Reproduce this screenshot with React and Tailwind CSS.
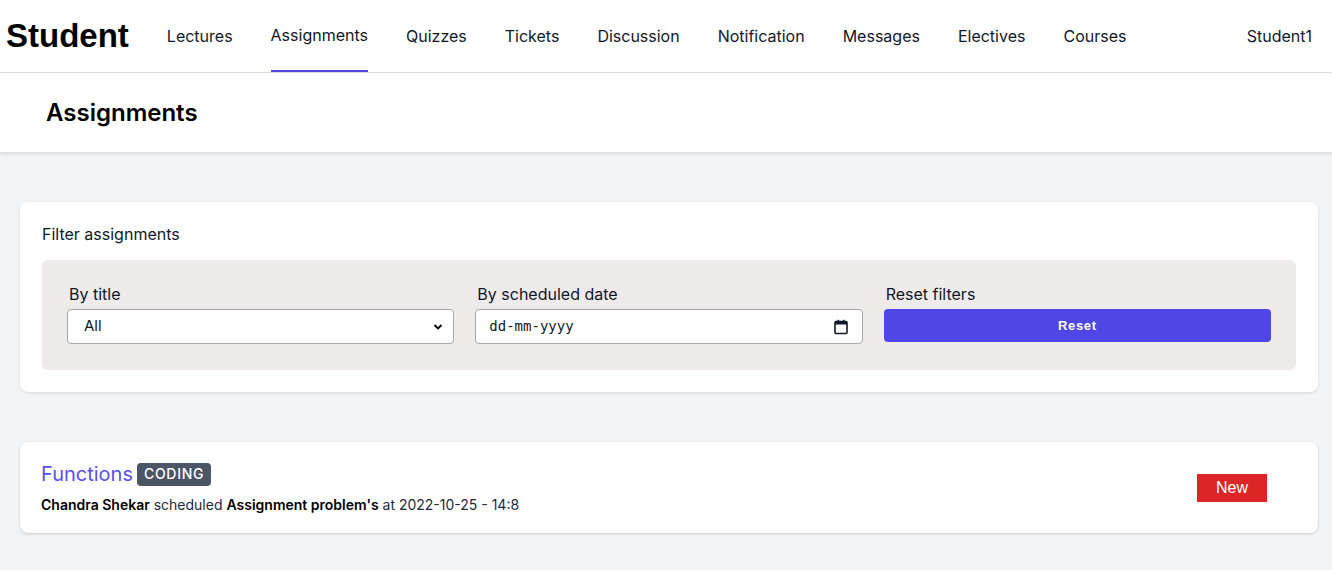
import React from 'react';

const navItems = ['Lectures', 'Assignments', 'Quizzes', 'Tickets', 'Discussion', 'Notification', 'Messages', 'Electives', 'Courses'];

const CalendarIcon = () => (
    <svg width="16" height="16" viewBox="0 0 16 16" className="text-gray-900">
        <rect x="2" y="2.5" width="12" height="12" rx="1" fill="none" stroke="currentColor" strokeWidth="1.6" />
        <rect x="2" y="2.5" width="12" height="3" fill="currentColor" />
        <rect x="4.5" y="0.8" width="1.6" height="3" fill="currentColor" />
        <rect x="9.9" y="0.8" width="1.6" height="3" fill="currentColor" />
    </svg>
);

const App = () => {
    return (
        <div className="min-h-screen bg-[#f3f4f6] text-gray-900" style={{ fontFamily: 'Inter, "Noto Sans", sans-serif' }}>
            {/* Top navigation */}
            <nav className="h-[73px] bg-white border-b border-[#dedede] flex items-center pl-[6px] pr-5">
                <div className="text-[33px] font-bold text-black mr-[38px]" style={{ fontFamily: '"Liberation Sans", Arial, sans-serif' }}>
                    Student
                </div>
                <div className="flex h-full gap-[38px]">
                    {navItems.map((item) => (
                        item === 'Assignments' ? (
                            <a key={item} className="h-full flex items-center pb-[1px] border-b-2 border-[#4f46e5] text-base text-gray-900">
                                {item}
                            </a>
                        ) : (
                            <a key={item} className="h-full flex items-center text-base text-gray-900">
                                {item}
                            </a>
                        )
                    ))}
                </div>
                <div className="ml-auto text-base text-gray-900">Student1</div>
            </nav>

            {/* Page header */}
            <header className="bg-white h-[79px] flex items-center pl-[46px] shadow-[0_2px_3px_rgba(0,0,0,0.1)]">
                <h1 className="text-2xl font-semibold text-black">Assignments</h1>
            </header>

            <main className="pl-5 pr-[14px] pt-[50px] pb-10">
                {/* Filters */}
                <section className="bg-white rounded-lg shadow-[0_1px_3px_rgba(0,0,0,0.12)] px-[22px] pt-5 pb-[22px]">
                    <p className="text-base leading-6 text-gray-900">Filter assignments</p>
                    <div className="mt-[14px] bg-[#efebea] rounded-md px-[25px] pt-[22px] pb-[26px] grid grid-cols-3 gap-[21px]">
                        <div>
                            <label className="block text-base leading-6 pl-[2px] text-gray-900">By title</label>
                            <div className="mt-[3px] h-[35px] bg-white border border-[#a8a8a8] rounded flex items-center justify-between pl-4 pr-[10px]">
                                <span className="text-[15px]">All</span>
                                <svg width="10" height="8" viewBox="0 0 10 8">
                                    <path d="M1.5 2 L5 5.5 L8.5 2" fill="none" stroke="black" strokeWidth="1.8" />
                                </svg>
                            </div>
                        </div>
                        <div>
                            <label className="block text-base leading-6 pl-[2px] text-gray-900">By scheduled date</label>
                            <div className="mt-[3px] h-[35px] bg-white border border-[#a8a8a8] rounded flex items-center justify-between pl-[13px] pr-[13px]">
                                <span className="text-[14px] text-gray-900" style={{ fontFamily: '"DejaVu Sans Mono", monospace' }}>dd-mm-yyyy</span>
                                <CalendarIcon />
                            </div>
                        </div>
                        <div>
                            <label className="block text-base leading-6 pl-[2px] text-gray-900">Reset filters</label>
                            <button className="mt-[3px] w-full h-[33px] bg-[#4f46e5] rounded text-white text-[13px] font-bold tracking-wider" style={{ fontFamily: '"Liberation Sans", Arial, sans-serif' }}>
                                Reset
                            </button>
                        </div>
                    </div>
                </section>

                {/* Assignment list */}
                <section className="mt-[50px] bg-white rounded-lg shadow-[0_1px_3px_rgba(0,0,0,0.18)] pl-[21px] pr-[51px] py-[18px] flex items-center justify-between">
                    <div>
                        <div className="flex items-center gap-[4px] h-7">
                            <span className="text-xl text-[#5b50e6]">Functions</span>
                            <span className="bg-[#4b5563] text-white text-sm font-medium tracking-wider rounded px-[7px] h-[23px] flex items-center">CODING</span>
                        </div>
                        <p className="mt-[7px] text-sm leading-5 text-gray-800">
                            <span className="font-semibold text-black">Chandra Shekar</span> scheduled{' '}
                            <span className="font-semibold text-black">Assignment problem's</span> at 2022-10-25 - 14:8
                        </p>
                    </div>
                    <span className="bg-[#dc2626] text-white text-base px-[19px] h-7 flex items-center" style={{ fontFamily: '"Liberation Sans", Arial, sans-serif' }}>
                        New
                    </span>
                </section>
            </main>
        </div>
    );
};

export default App;
